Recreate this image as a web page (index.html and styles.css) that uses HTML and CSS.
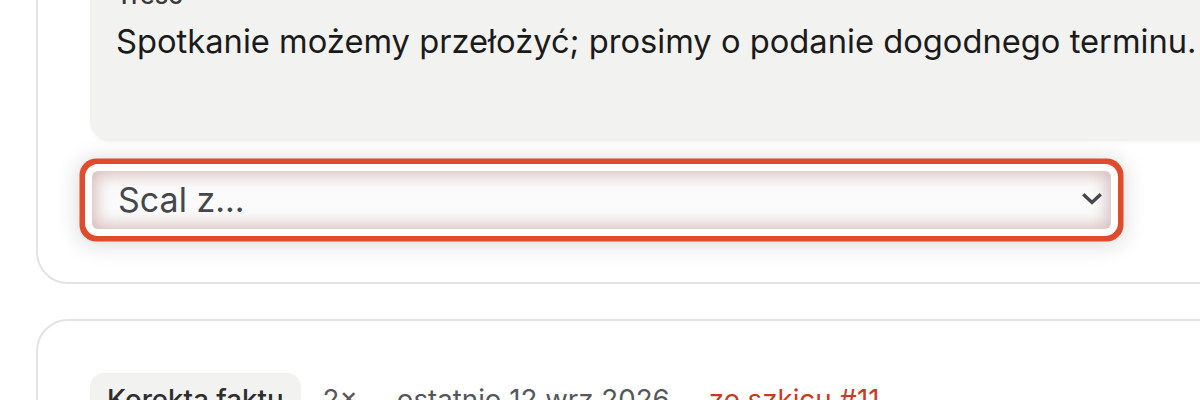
FILE: index.html
```html
<!DOCTYPE html>
<html lang="pl">
<head>
<meta charset="utf-8">
<title>Scal</title>
<link rel="stylesheet" href="styles.css">
</head>
<body>
<div class="page">
  <section class="card card-first">
    <div class="preview">
      <div class="preview-label">Treść</div>
      <p class="preview-text">Spotkanie możemy przełożyć; prosimy o podanie dogodnego terminu.</p>
    </div>
    <div class="select" role="combobox" aria-expanded="false">
      <span class="select-value">Scal z...</span>
      <svg class="chevron" width="20" height="12" viewBox="0 0 20 12" aria-hidden="true">
        <path d="M2.5 2.5 L10 9.5 L17.5 2.5" fill="none" stroke="#45474c" stroke-width="3.4" stroke-linecap="square"/>
      </svg>
    </div>
  </section>
  <section class="card card-second">
    <div class="meta">
      <span class="badge">Korekta faktu</span>
      <span class="meta-item">2×</span>
      <span class="meta-item meta-spaced">ostatnio 12 wrz 2026</span>
      <span class="meta-link meta-spaced">ze szkicu #11</span>
    </div>
  </section>
</div>
</body>
</html>
```

FILE: styles.css
```css
html, body {
  margin: 0;
  padding: 0;
  background: #ffffff;
  overflow: hidden;
  width: 1200px;
  height: 400px;
}

body {
  font-family: Inter, "Noto Sans", "Liberation Sans", sans-serif;
  color: #1b1b1b;
}

.page {
  margin-top: -101px;
  padding-left: 36px;
  display: flex;
  flex-direction: column;
  gap: 35px;
}

.card {
  width: 1240px;
  border: 2px solid #e3e3e1;
  border-radius: 32px;
  background: #ffffff;
  box-sizing: border-box;
}

.card-first {
  padding: 52px 0 53px 52px;
}

.preview {
  width: 1150px;
  background: #f2f2f0;
  border-radius: 20px;
  padding: 24px 0 76px 26px;
  box-sizing: border-box;
  box-shadow: 0 2px 3px rgba(0, 0, 0, 0.03);
}

.preview-label {
  font-size: 25px;
  line-height: 36px;
  color: #3a3a3a;
  font-weight: 500;
}

.preview-text {
  margin: 4px 0 0;
  font-size: 32.7px;
  line-height: 48px;
  color: #1b1b1b;
  white-space: nowrap;
}

.select {
  margin: 30px 0 0 2px;
  width: 1019px;
  height: 58px;
  box-sizing: border-box;
  border-radius: 6px;
  background: #fbfbfb;
  display: flex;
  align-items: center;
  justify-content: space-between;
  padding: 0 9px 0 26px;
  box-shadow:
    inset 0 0 16px 4px rgba(170, 110, 110, 0.45),
    0 0 0 7px #ffffff,
    0 0 0 12.5px #e04a2d,
    0 2px 22px 14px rgba(0, 0, 0, 0.15);
}

.select-value {
  font-size: 34px;
  line-height: 58px;
  color: #45474c;
}

.chevron {
  display: block;
  margin-top: -2px;
}

.card-second {
  padding: 52px 0 40px 52px;
}

.meta {
  display: flex;
  align-items: flex-start;
  gap: 22px;
  font-size: 27.7px;
  line-height: 42px;
  color: #55575b;
}

.meta-item,
.meta-link {
  padding-top: 5px;
}

.badge {
  background: #f2f2f0;
  color: #2e2e2e;
  border-radius: 14px;
  padding: 5px 17px 8px;
  font-weight: 500;
}

.meta-spaced {
  margin-left: 17px;
}

.meta-link {
  color: #c93a24;
}
```
